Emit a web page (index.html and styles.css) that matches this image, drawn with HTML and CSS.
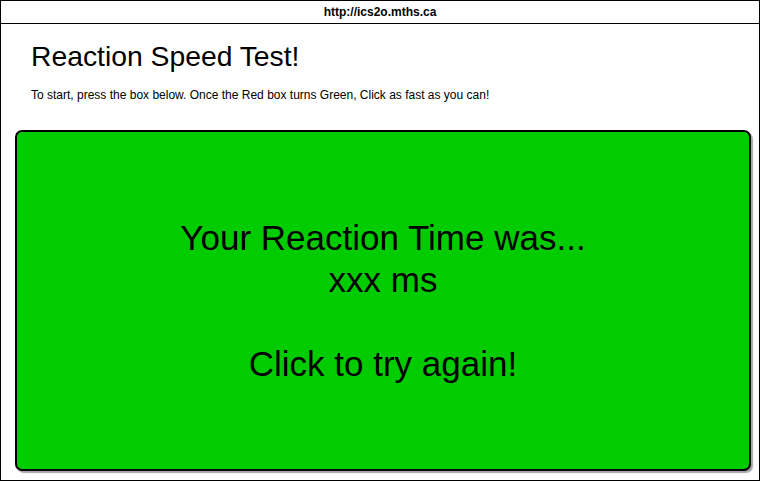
FILE: index.html
```html
<!DOCTYPE html>
<html>
<head>
<meta charset="utf-8">
<link rel="stylesheet" href="styles.css">
</head>
<body>
<div class="frame">
  <div class="urlbar">http://ics2o.mths.ca</div>
  <div class="content">
    <h1 class="title">Reaction Speed Test!</h1>
    <p class="intro">To start, press the box below. Once the Red box turns Green, Click as fast as you can!</p>
    <div class="box">
      <div class="msg">Your Reaction Time was...<br>xxx ms<br><br>Click to try again!</div>
    </div>
  </div>
</div>
</body>
</html>
```
FILE: styles.css
```css
html, body {
  margin: 0;
  padding: 0;
  background: #fff;
}
body {
  font-family: "Liberation Sans", Arial, sans-serif;
  color: #000;
}
.frame {
  box-sizing: border-box;
  width: 760px;
  height: 481px;
  border: 1px solid #000;
  display: flex;
  flex-direction: column;
}
.urlbar {
  height: 22px;
  border-bottom: 1px solid #000;
  font-size: 12px;
  font-weight: bold;
  text-align: center;
  line-height: 22px;
}
.content {
  flex: 1;
  display: flex;
  flex-direction: column;
}
.title {
  margin: 16px 0 0 30px;
  font-size: 28.3px;
  font-weight: normal;
  line-height: 32px;
}
.intro {
  margin: 16px 0 0 30px;
  font-size: 12px;
  line-height: 14px;
}
.box {
  box-sizing: border-box;
  margin: 28px 0 0 14px;
  width: 736px;
  height: 341px;
  background: #00cc00;
  border: 2px solid #000;
  border-radius: 7px;
  box-shadow: 2px 2px 1px rgba(0,0,0,0.35);
  display: flex;
  align-items: center;
  justify-content: center;
}
.msg {
  font-size: 35px;
  line-height: 42px;
  text-align: center;
}
```
